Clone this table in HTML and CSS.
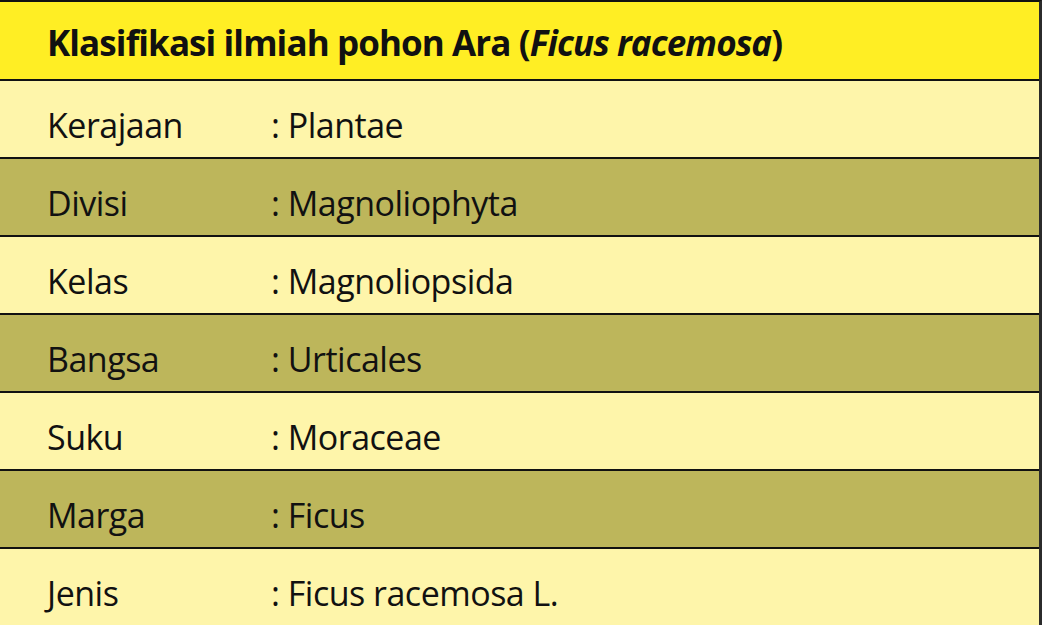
FILE: index.html
```html
<!DOCTYPE html>
<html lang="id">
<head>
<meta charset="utf-8">
<title>Klasifikasi ilmiah pohon Ara</title>
<link rel="stylesheet" href="styles.css">
</head>
<body>
<div class="table">
  <div class="head">Klasifikasi ilmiah pohon Ara (<i>Ficus racemosa</i>)</div>
  <div class="row light"><span class="label">Kerajaan</span><span class="value">: Plantae</span></div>
  <div class="row dark"><span class="label">Divisi</span><span class="value">: Magnoliophyta</span></div>
  <div class="row light"><span class="label">Kelas</span><span class="value">: Magnoliopsida</span></div>
  <div class="row dark"><span class="label">Bangsa</span><span class="value">: Urticales</span></div>
  <div class="row light"><span class="label">Suku</span><span class="value">: Moraceae</span></div>
  <div class="row dark"><span class="label">Marga</span><span class="value">: Ficus</span></div>
  <div class="row light last"><span class="label">Jenis</span><span class="value">: Ficus racemosa L.</span></div>
</div>
</body>
</html>
```
FILE: styles.css
```css
html, body {
  margin: 0;
  padding: 0;
  background: #fef5aa;
}
body {
  width: 1042px;
  height: 625px;
  overflow: hidden;
  font-family: "Open Sans", "Noto Sans", sans-serif;
  color: #111;
}
.table {
  width: 1039px;
  border-top: 2px solid #111;
  border-right: 3px solid #2b2b2b;
  display: flex;
  flex-direction: column;
}
.head {
  height: 79px;
  box-sizing: border-box;
  padding: 23px 0 0 47px;
  background: #ffee24;
  border-bottom: 2px solid #111;
  font-size: 35px;
  line-height: 1;
  font-weight: 700;
  letter-spacing: -0.9px;
  white-space: nowrap;
}
.head i {
  font-style: italic;
}
.row {
  height: 78px;
  box-sizing: border-box;
  padding: 27px 0 0 47px;
  display: flex;
  align-items: flex-start;
  border-bottom: 2px solid #111;
  font-size: 34px;
  line-height: 1;
  letter-spacing: -0.5px;
}
.row.last {
  border-bottom: none;
}
.light {
  background: #fef5aa;
}
.dark {
  background: #bdb65b;
}
.label {
  width: 224px;
  flex: none;
}
.value {
  flex: 1;
}
```
